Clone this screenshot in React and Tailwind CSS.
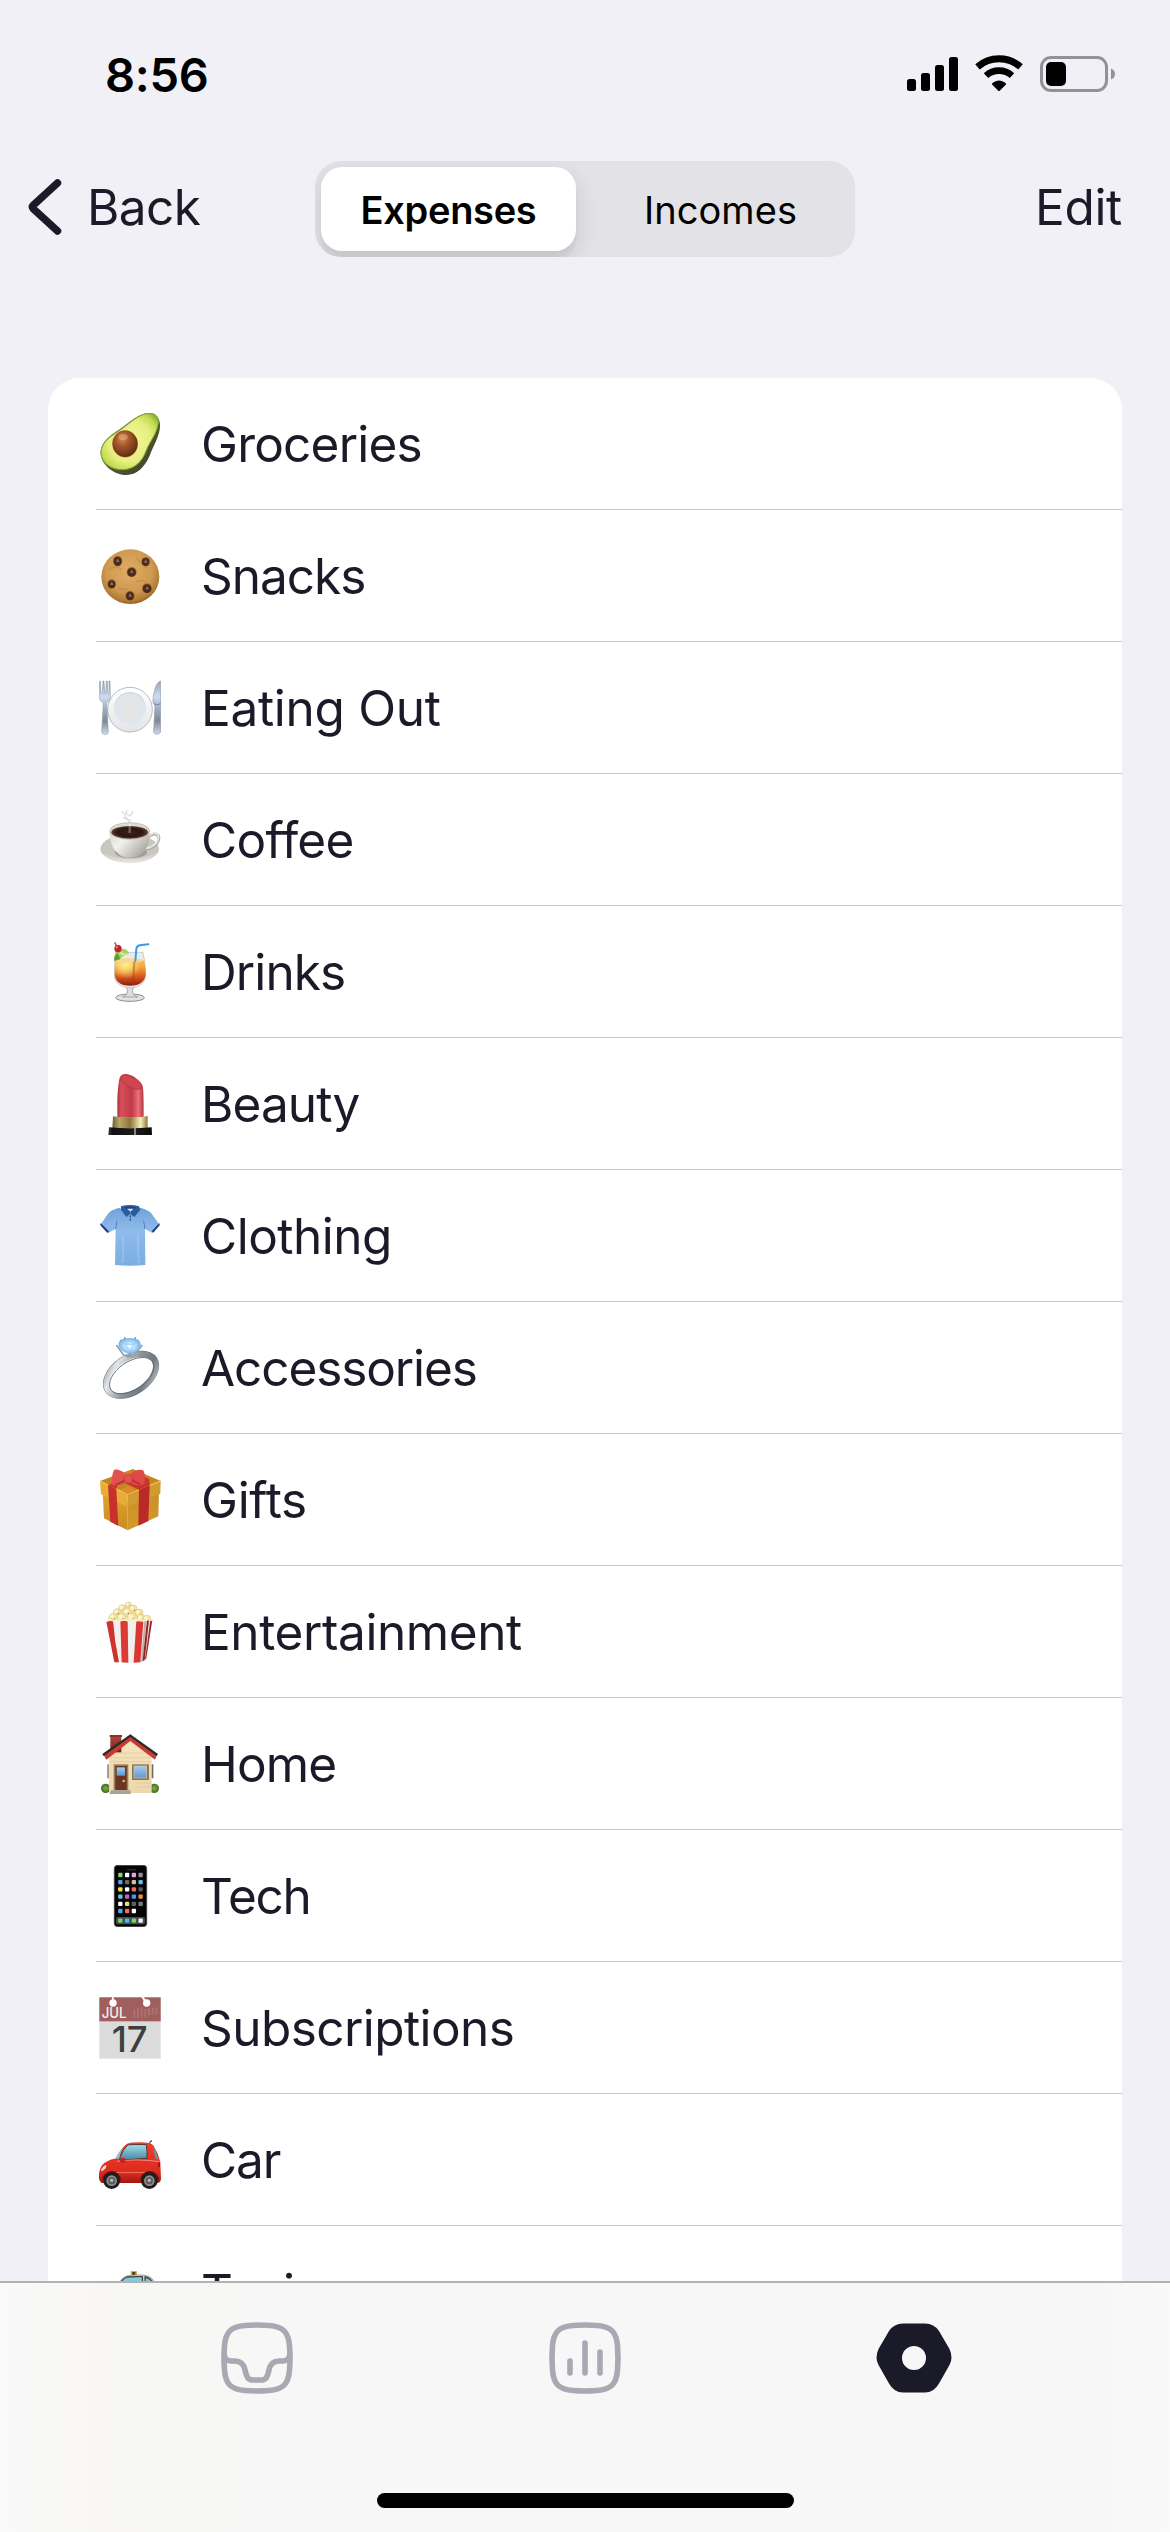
import React from "react";

function Lin({ id, stops, x1 = 0, y1 = 0, x2 = 0, y2 = 1 }) {
  return (
    <linearGradient id={id} x1={x1} y1={y1} x2={x2} y2={y2}>
      {stops.map(([o, c]) => (
        <stop key={o} offset={o} stopColor={c} />
      ))}
    </linearGradient>
  );
}

function Rad({ id, stops, cx = 0.5, cy = 0.5, r = 0.5 }) {
  return (
    <radialGradient id={id} cx={cx} cy={cy} r={r}>
      {stops.map(([o, c]) => (
        <stop key={o} offset={o} stopColor={c} />
      ))}
    </radialGradient>
  );
}

function Emoji({ children }) {
  return (
    <svg viewBox="0 0 186 186" className="h-[62px] w-[62px] shrink-0">
      {children}
    </svg>
  );
}

function Avocado() {
  return (
    <Emoji>
      <defs>
        <Lin id="avSkin" x1={0} x2={1} stops={[[0, "#5f8a1e"], [0.55, "#4d5a30"], [1, "#3c3a2a"]]} />
        <Rad id="avFlesh" cx={0.5} cy={0.5} r={0.62} stops={[[0, "#f4f79a"], [0.6, "#e6ef7e"], [0.85, "#c3dc52"], [1, "#8fb62f"]]} />
        <Rad id="avPit" cx={0.4} cy={0.32} r={0.7} stops={[[0, "#d98a50"], [0.4, "#a3562a"], [1, "#5e2a12"]]} />
      </defs>
      <path d="M150 0C170 0 185 18 183 40C182 66 168 90 156 118C146 146 124 186 82 186C50 186 8 160 5 122C4 84 40 64 66 46C94 26 116 2 150 0Z" fill="url(#avSkin)" />
      <path d="M148 1C168 0 180 10 178 30C174 62 154 82 142 112C130 146 106 170 70 170C34 170 6 148 6 120C6 84 42 66 68 48C96 28 118 4 148 1Z" fill="url(#avFlesh)" stroke="#7fa635" strokeWidth="3" />
      <ellipse cx="79" cy="94" rx="38" ry="40" fill="#c9b64c" />
      <ellipse cx="78" cy="92" rx="38" ry="40" fill="url(#avPit)" />
      <ellipse cx="72" cy="72" rx="14" ry="9" fill="#e9ab7d" opacity=".55" />
    </Emoji>
  );
}

const chips = [[56, 48, 12, 14], [140, 50, 11, 12], [98, 81, 13, 13], [38, 117, 11, 12], [144, 130, 13, 13], [93, 152, 12, 13]];

function Cookie() {
  return (
    <Emoji>
      <defs>
        <Rad id="ckBase" cx={0.48} cy={0.4} r={0.6} stops={[[0, "#dfad66"], [0.65, "#cf9a52"], [0.9, "#b47d37"], [1, "#935f25"]]} />
      </defs>
      <ellipse cx="94" cy="95" rx="87" ry="82" fill="url(#ckBase)" />
      <path d="M30 72q24-12 38 2M110 112q16-12 30 0M58 128q18 10 28 2M112 40q14 14 34 30" stroke="#b98440" strokeWidth="4" fill="none" opacity=".6" />
      {chips.map(([x, y, a, b]) => (
        <g key={x}>
          <ellipse cx={x} cy={y} rx={a + 2} ry={b + 2} fill="#a8682c" />
          <ellipse cx={x} cy={y + 1} rx={a} ry={b} fill="#4a2b1b" />
          <path d={`M${x - 5} ${y + 3}l5 -11l6 11z`} fill="#8a6a5a" />
        </g>
      ))}
    </Emoji>
  );
}

function Plate() {
  return (
    <Emoji>
      <defs>
        <Lin id="plRim" stops={[[0, "#ffffff"], [1, "#e4e4e6"]]} />
        <Lin id="plSteel" stops={[[0, "#9aa5b4"], [0.3, "#cfdcf0"], [0.45, "#a9bcd6"], [0.75, "#84878d"], [1, "#c9dcf5"]]} />
      </defs>
      <circle cx="93" cy="98" r="67" fill="url(#plRim)" stroke="#b5bcc5" strokeWidth="3" />
      <circle cx="93" cy="92" r="47" fill="#d3d6da" />
      <circle cx="93" cy="95" r="46" fill="#dde6f2" />
      <circle cx="93" cy="91" r="38" fill="#e4e4e4" />
      <path d="M2 12l2 0l2 36h4l2-36h3l2 36h3l2-36h3l1 36h4l0-36h3l1 44c0 14-6 18-11 21l5 86c1 13-20 13-20 0l5-86c-6-3-14-7-12-21z" fill="url(#plSteel)" stroke="#8792a0" strokeWidth="1.5" />
      <path d="M185 12v150c0 13-22 13-21 0l4-78c-8-3-7-18-4-32c4-20 9-36 21-40z" fill="url(#plSteel)" stroke="#8e9aaa" strokeWidth="2" />
      <path d="M164 80q10 7 21 0" stroke="#7d8896" strokeWidth="3" fill="none" />
    </Emoji>
  );
}

function Coffee() {
  return (
    <Emoji>
      <defs>
        <Lin id="cfSaucer" stops={[[0, "#b9b7b0"], [0.6, "#c9c7c0"], [1, "#e6e5e0"]]} />
        <Lin id="cfCup" x2={1} y2={0.6} stops={[[0, "#d8d6d0"], [0.4, "#f2f1ee"], [1, "#a9a7a1"]]} />
        <Rad id="cfBrew" stops={[[0, "#3a211a"], [0.7, "#2c1611"], [1, "#60402c"]]} />
      </defs>
      <g fill="none" stroke="#dcdce0" strokeLinecap="round" strokeWidth="4">
        <path d="M68 8q12 6 12 16q10 6 10 22" />
        <path d="M84 4q-6 12 6 14M102 8q-6 10-10 14M74 26q14 10 22 8M94 40v8" />
      </g>
      <ellipse cx="92" cy="120" rx="88" ry="42" fill="url(#cfSaucer)" />
      <ellipse cx="92" cy="114" rx="84" ry="36" fill="#c8c6bf" />
      <ellipse cx="96" cy="130" rx="48" ry="18" fill="#8f8d86" opacity=".7" />
      <path d="M146 86c20-20 38-10 32 8c-6 18-24 26-40 26" fill="none" stroke="#aeaca6" strokeWidth="9" />
      <path d="M147 84c20-20 36-10 30 8c-6 16-22 24-38 26" fill="none" stroke="#eceae6" strokeWidth="5" />
      <path d="M32 66c0 26 4 46 20 62c12 14 26 18 40 18s30-4 42-18c14-14 18-34 18-62z" fill="url(#cfCup)" />
      <ellipse cx="92" cy="66" rx="60" ry="25" fill="#dcdad5" stroke="#b2b0aa" strokeWidth="2" />
      <ellipse cx="92" cy="70" rx="55" ry="19" fill="url(#cfBrew)" />
      <path d="M92 44v28" stroke="#ffffff" opacity=".3" strokeWidth="7" />
    </Emoji>
  );
}

function Drink() {
  return (
    <Emoji>
      <defs>
        <Lin id="drLiquid" stops={[[0, "#f6c95c"], [0.3, "#f2a83a"], [0.65, "#d95a1e"], [1, "#8e1b0c"]]} />
        <Rad id="drGlow" cx={0.35} cy={0.25} r={0.5} stops={[[0, "#fff08a"], [1, "#fff08a00"]]} />
      </defs>
      <ellipse cx="93" cy="170" rx="43" ry="11" fill="#e2e2e0" stroke="#8d8d8b" strokeWidth="3" />
      <path d="M80 136q10 12 4 22q-4 8-14 10h46q-10-2-14-10q-6-10 4-22z" fill="#dededc" stroke="#9a9a98" strokeWidth="2.5" />
      <path d="M50 34h82q8 40 8 64c0 26-16 42-47 42s-47-16-47-42q0-24 4-64z" fill="#e9ecec" stroke="#b4b8b8" strokeWidth="2" />
      <path d="M49 56q42-8 86 2q5 24 5 40c0 22-18 36-47 36s-46-14-46-36q0-20 2-42z" fill="url(#drLiquid)" />
      <path d="M49 56q42-8 86 2q5 24 5 40c0 22-18 36-47 36s-46-14-46-36q0-20 2-42z" fill="url(#drGlow)" />
      <ellipse cx="92" cy="58" rx="42" ry="6" fill="#f3d9a0" />
      <path d="M46 58q-4-22 14-30q16-10 26 2l4 8q-14 2-20 10q-10 12-24 10z" fill="#a9cf5d" />
      <path d="M46 60q-2-14 10-24l8 18z" fill="#55a036" />
      <path d="M62 36l24 4M64 30l10 18" stroke="#e9f4c0" strokeWidth="3" />
      <path d="M47 4l6 12" stroke="#8d5a36" strokeWidth="4" />
      <circle cx="57" cy="23" r="11" fill="#c5242b" />
      <circle cx="53" cy="19" r="3" fill="#f59a92" />
      <path d="M109 60l3-36q1-9 10-11l26-3" fill="none" stroke="#3f9ade" strokeWidth="6" strokeLinecap="round" />
      <path d="M106 62l-4 66" stroke="#a3410f" opacity=".45" strokeWidth="6" />
    </Emoji>
  );
}

function Lipstick() {
  return (
    <Emoji>
      <defs>
        <Lin id="lpRed" x2={1} y2={0} stops={[[0, "#b3313c"], [0.15, "#d4505a"], [0.55, "#c23a45"], [0.8, "#e8727a"], [1, "#b43440"]]} />
        <Lin id="lpGold" x2={1} y2={0} stops={[[0, "#6f612f"], [0.2, "#b8a76c"], [0.5, "#8a7636"], [0.8, "#f6efb8"], [1, "#8d7a3a"]]} />
        <Lin id="lpBlack" x2={1} y2={0} stops={[[0, "#3a3a3a"], [0.1, "#111111"], [0.58, "#1b1b1b"], [0.61, "#c8c8c8"], [0.64, "#1b1b1b"], [1, "#0a0a0a"]]} />
      </defs>
      <path d="M55 134V90C55 60 58 30 62 14C66 2 78 2 86 4C106 8 130 26 132 44C134 64 134 100 134 134Z" fill="url(#lpRed)" />
      <path d="M66 14C70 4 84 4 94 10C112 18 128 32 129 42C128 52 106 50 92 42C76 34 62 24 66 14Z" fill="#cf4650" stroke="#a72c38" strokeWidth="2" />
      <path d="M42 130q52 8 104-1v37H40z" fill="url(#lpGold)" />
      <path d="M30 163q64 6 128 0l1 23H28z" fill="url(#lpBlack)" />
    </Emoji>
  );
}

function Shirt() {
  return (
    <Emoji>
      <defs>
        <Lin id="shBody" stops={[[0, "#6fa2dc"], [0.4, "#8fbbea"], [1, "#7aaee4"]]} />
      </defs>
      <path d="M60 8C44 14 34 16 26 28L4 60L28 84L50 72L48 180Q94 184 139 180L138 72L160 84L182 60L158 26C150 16 140 14 126 8Q94 30 60 8Z" fill="url(#shBody)" />
      <path d="M50 72l4-24M138 72l-4-24" stroke="#4d7fbd" strokeWidth="3" />
      <path d="M5 54l25 25l-5 5L4 61zM181 54l-23 25l5 4l19-22z" fill="#1e4380" />
      <path d="M66 4q27-8 54 0l4 10l-18 22l-12-10l-12 10l-16-22z" fill="#2c5b9e" />
      <path d="M76 7q18-5 36 0l-18 14z" fill="#1c4682" />
      <path d="M84 11h20l-10 9z" fill="#d8e4f2" />
      <path d="M94 22v26" stroke="#4f80ba" strokeWidth="4" />
      <circle cx="94" cy="34" r="2" fill="#234c84" />
      <circle cx="94" cy="45" r="2" fill="#234c84" />
      <path d="M70 90q6 40 0 84M118 86q-4 44 2 88" stroke="#a9cdf2" strokeWidth="6" opacity=".5" fill="none" />
    </Emoji>
  );
}

function Ring() {
  return (
    <Emoji>
      <defs>
        <Lin id="rgBand" x2={1} y2={1} stops={[[0, "#8d9299"], [0.2, "#e4e7ea"], [0.5, "#8e949b"], [0.75, "#71787f"], [1, "#c9cdd1"]]} />
        <Rad id="rgGem" stops={[[0, "#f2faff"], [0.5, "#b9defc"], [1, "#6fb2ee"]]} />
      </defs>
      <ellipse cx="96" cy="113" rx="91" ry="58" transform="rotate(-34 96 113)" fill="none" stroke="#666c73" strokeWidth="4" />
      <ellipse cx="96" cy="114" rx="83" ry="51" transform="rotate(-34 96 114)" fill="none" stroke="url(#rgBand)" strokeWidth="17" />
      <ellipse cx="98" cy="116" rx="75" ry="42" transform="rotate(-34 98 116)" fill="none" stroke="#5f666d" strokeWidth="2.5" />
      <path d="M52 24l22 30q16 8 32 0l24-30M86 62l6-14l8 14" stroke="#989ea5" strokeWidth="5" fill="none" />
      <path d="M64 8q28-10 54 0q10 10 6 22q-12 18-32 20q-20-2-32-20q-4-12 4-22z" fill="url(#rgGem)" />
      <path d="M66 12l14 10l12-14l12 14l14-10M80 22l12 24l12-24z" stroke="#8fc2f0" strokeWidth="2" fill="none" />
      <path d="M76 0l3 7M110 0l-3 7" stroke="#8b9096" strokeWidth="4" />
    </Emoji>
  );
}

function Gift() {
  return (
    <Emoji>
      <defs>
        <Lin id="gfL" stops={[[0, "#e3a52f"], [1, "#c98a22"]]} />
        <Lin id="gfR" stops={[[0, "#c8902a"], [1, "#d69a2c"]]} />
      </defs>
      <path d="M11 66L86 98V184L15 148Z" fill="url(#gfL)" />
      <path d="M86 98L180 66L178 142L86 184Z" fill="url(#gfR)" />
      <path d="M3 36L102 0L185 36L86 78Z" fill="#c28720" />
      <path d="M3 36L86 76V113L6 76Z" fill="#e8ac38" />
      <path d="M86 76L185 36L184 74L86 113Z" fill="#d39a30" />
      <path d="M3 36L86 76L185 36" fill="none" stroke="#f3d050" strokeWidth="3" />
      <path d="M27 48L52 60L58 171L34 158Z" fill="#c92f2b" />
      <path d="M120 62L152 49L148 156L118 170Z" fill="#b92a29" />
      <path d="M27 48L116 14L150 30L152 49L120 62L60 34L52 60Z" fill="#c6322d" />
      <path d="M64 62L88 50L112 64L86 76Z" fill="#e0892c" />
      <path d="M86 20C66 2 54 0 46 2C38 12 40 34 36 46C52 54 74 48 86 36Z" fill="#e2524c" />
      <path d="M88 20C108 2 124 0 132 4C140 14 138 32 136 46C118 54 102 48 88 36Z" fill="#e04a46" />
      <path d="M50 46q20-4 34-18M124 46q-18-6-32-18" stroke="#a62a2a" strokeWidth="4" fill="none" />
      <circle cx="88" cy="30" r="13" fill="#e3534e" stroke="#bb3534" strokeWidth="2" />
    </Emoji>
  );
}

const kernels = [[88, 12, 9], [70, 22, 11], [102, 24, 12], [54, 34, 11], [84, 34, 13], [120, 36, 12], [42, 50, 12], [68, 50, 13], [98, 50, 14], [126, 52, 12], [144, 54, 11], [34, 58, 7]];

function Popcorn() {
  return (
    <Emoji>
      {kernels.map(([x, y, r]) => (
        <g key={`${x}-${y}`}>
          <circle cx={x} cy={y} r={r} fill="#f3e3a2" stroke="#dcc57a" strokeWidth="2" />
          <circle cx={x - 3} cy={y - 3} r={r / 2} fill="#fdf6d2" />
          <circle cx={x + 4} cy={y + 4} r="2.5" fill="#b88334" />
        </g>
      ))}
      <path d="M22 62Q90 50 160 58L140 174L122 184Q84 186 46 184Z" fill="#f4efec" />
      <path d="M22 62L42 58Q46 120 60 184H46Z" fill="#cf3330" />
      <path d="M64 59L86 60L88 185L68 184Z" fill="#dc3a35" />
      <path d="M112 60L133 62L124 184L104 185Z" fill="#d83733" />
      <path d="M136 60L142 59L132 180L126 183Z" fill="#c9a9a2" />
      <path d="M144 57L150 57L137 178L131 180Z" fill="#8e2622" />
      <path d="M154 56L160 57L142 172L138 176Z" fill="#9d2b26" />
      <path d="M22 62q10-8 20-2q10-6 22 0q12-6 22 0q14-6 26 0q10-6 22 0q12-6 26-2" stroke="#f8eec6" strokeWidth="4" fill="none" />
    </Emoji>
  );
}

function House() {
  return (
    <Emoji>
      <defs>
        <Lin id="hsWall" stops={[[0, "#f7e4bd"], [1, "#ecd7ae"]]} />
        <Lin id="hsPane" stops={[[0, "#a4cbee"], [1, "#5f98d2"]]} />
        <Rad id="hsBush" stops={[[0, "#8aab4b"], [1, "#3f6a24"]]} />
        <Lin id="hsChimney" stops={[[0, "#b4493e"], [1, "#6e1f1a"]]} />
      </defs>
      <circle cx="20" cy="166" r="14" fill="url(#hsBush)" />
      <circle cx="166" cy="166" r="14" fill="url(#hsBush)" />
      <rect x="24" y="94" width="6" height="42" fill="#a6a092" />
      <rect x="157" y="94" width="6" height="42" fill="#6d6a60" />
      <path d="M30 72L94 18L158 72V180H30Z" fill="url(#hsWall)" />
      <path d="M50 60h90M34 74h120M32 86h124M112 150h44M112 162h44" stroke="#dcc698" strokeWidth="2" />
      <rect x="34" y="8" width="33" height="50" fill="url(#hsChimney)" />
      <rect x="32" y="6" width="37" height="6" fill="#8e3028" />
      <path d="M94 6L174 66L168 80L94 24L22 80L14 66Z" fill="#c83b32" />
      <path d="M12 66L94 8L175 66" fill="none" stroke="#2b2b29" strokeWidth="7" />
      <rect x="44" y="94" width="44" height="78" fill="#9a7d5a" />
      <rect x="49" y="99" width="34" height="72" fill="#6b3321" />
      <rect x="53" y="103" width="25" height="25" fill="url(#hsPane)" />
      <circle cx="74" cy="144" r="4" fill="#e8bd4a" />
      <rect x="99" y="94" width="51" height="47" fill="#8f7656" />
      <rect x="105" y="99" width="38" height="36" fill="url(#hsPane)" stroke="#d8c7a4" strokeWidth="2" />
      <path d="M36 172h58l2 11H32z" fill="#a8a297" />
    </Emoji>
  );
}

const appRows = [
  ["#7ad66d", "#ffffff", "#e3a3ec", "#8f8f8f"],
  ["#4aa8f0", "#6c6c6c", "#d9bd95", "#5fc3e8"],
  ["#f5df5b", "#ffffff", "#ef6a60", "#5a5a5a"],
  ["#5ccbd2", "#cc58d6", "#3f9cf0", "#ef9330"],
  ["#ffffff", "#f3e05c", "#5f5f5f", "#7c7c7c"],
  ["#4fa9ef", "#ef6a60", "#ffffff"],
];
const dock = ["#6fd867", "#4fb4f2", "#6fd867", "#f2f2f2"];

function Phone() {
  return (
    <Emoji>
      <rect x="46" y="1" width="97" height="184" rx="10" fill="#050505" stroke="#454547" strokeWidth="3" />
      <rect x="84" y="11" width="28" height="6" rx="3" fill="#222" />
      {appRows.map((row, r) =>
        row.map((c, i) => <rect key={`${r}-${i}`} x={57.5 + i * 20.3} y={23.5 + r * 21.6} width="13" height="13" rx="3" fill={c} />)
      )}
      <rect x="51" y="156" width="87" height="22" rx="5" fill="#4b4b4d" />
      {dock.map((c, i) => (
        <rect key={i} x={57.5 + i * 20.3} y="160.5" width="13" height="13" rx="3" fill={c} />
      ))}
    </Emoji>
  );
}

function Calendar() {
  return (
    <Emoji>
      <rect x="0" y="0" width="186" height="186" fill="#e6e6e6" />
      <rect x="3" y="72" width="180" height="110" fill="#dbdbdb" />
      <rect x="1" y="1" width="184" height="72" fill="#a05f5d" />
      <path d="M39 0h5v14h-5zM127 0h7l10 14h-8z" fill="#fff" />
      <circle cx="42" cy="18" r="11" fill="#fff" />
      <circle cx="143" cy="18" r="11" fill="#fff" />
      <path d="M106 38v24M117 34v28M128 32v30M139 36v26M150 34v20M161 32v22M172 32v20" stroke="#b98784" strokeWidth="5" strokeDasharray="2.5 2" />
      <text x="8" y="63" fontFamily="Inter, sans-serif" fontSize="42" fontWeight="500" fill="#f7efef" textLength="74" lengthAdjust="spacingAndGlyphs">JUL</text>
      <text x="38" y="166" fontFamily="Inter, sans-serif" fontSize="108" fontWeight="500" fill="#3c3f3d" textLength="108" lengthAdjust="spacingAndGlyphs">17</text>
    </Emoji>
  );
}

function Wheel({ cx, cy }) {
  return (
    <g>
      <circle cx={cx} cy={cy} r="25" fill="#1e1e1e" />
      <circle cx={cx} cy={cy} r="16" fill="#8f8f91" />
      <circle cx={cx} cy={cy} r="11" fill="#5c5c5e" />
      <circle cx={cx} cy={cy - 1} r="5" fill="#b9b9bb" />
    </g>
  );
}

function Car() {
  return (
    <Emoji>
      <defs>
        <Lin id="crBody" stops={[[0, "#e8402e"], [0.45, "#e63225"], [0.75, "#dc2a1e"], [1, "#9e1710"]]} />
        <Lin id="crGlass" stops={[[0, "#9be0ea"], [1, "#4d86a2"]]} />
      </defs>
      <path d="M150 46l4-8l5-3" stroke="#555" strokeWidth="4" fill="none" />
      <path d="M0 136Q2 112 16 102Q34 90 52 88Q66 56 84 44Q96 40 124 40Q154 40 164 50Q178 72 184 100L186 148Q186 160 176 162H8Q-2 158 0 136Z" fill="url(#crBody)" />
      <path d="M62 88Q72 60 86 48Q94 46 142 47Q145 66 144 88Q100 92 62 92Z" fill="url(#crGlass)" stroke="#59332f" strokeWidth="3" />
      <path d="M50 88Q60 66 74 54Q64 70 60 90Z" fill="#7fc3d0" />
      <path d="M162 52Q172 66 178 92L170 90Q164 70 162 52Z" fill="#5f97a5" />
      <path d="M54 97Q110 88 182 98" stroke="#f58c78" strokeWidth="3" fill="none" />
      <path d="M30 130Q80 132 140 130" stroke="#f36e5c" strokeWidth="3" fill="none" />
      <path d="M6 126Q8 112 22 108Q24 118 10 126Z" fill="#f8d7cf" />
      <path d="M180 100v14" stroke="#7b120c" strokeWidth="4" />
      <rect x="63" y="86" width="16" height="16" rx="6" fill="#c72118" />
      <path d="M10 154a28 28 0 0 1 56 0zM124 154a28 28 0 0 1 56 0z" fill="#6b0f0a" />
      <Wheel cx={38} cy={155} />
      <Wheel cx={151} cy={155} />
    </Emoji>
  );
}

function Taxi() {
  return (
    <Emoji>
      <rect x="95" y="30" width="19" height="13" rx="3" fill="#e3a93a" />
      <rect x="100" y="33" width="9" height="9" fill="#4d3a1e" />
      <path d="M58 72Q66 50 84 45Q104 40 130 42Q152 44 160 54Q168 64 174 80L184 110V150H2V110Q20 94 58 90Z" fill="#dcdcda" stroke="#777" strokeWidth="2" />
      <path d="M60 76Q68 54 84 48Q104 46 130 47L132 90H56ZM138 48Q152 50 158 60L170 90H140Z" fill="#84cbd6" stroke="#444" strokeWidth="4" />
    </Emoji>
  );
}

const categories = [
  ["Groceries", Avocado, "tracking-[-0.78px]"],
  ["Snacks", Cookie, "tracking-[-1px]"],
  ["Eating Out", Plate, "tracking-[-0.3px]"],
  ["Coffee", Coffee, "tracking-[-0.7px]"],
  ["Drinks", Drink, "tracking-[-0.9px]"],
  ["Beauty", Lipstick, "tracking-[-0.9px]"],
  ["Clothing", Shirt, "tracking-[-0.5px]"],
  ["Accessories", Ring, "tracking-[-1.1px]"],
  ["Gifts", Gift, "tracking-[-0.3px]"],
  ["Entertainment", Popcorn, "tracking-[-0.4px]"],
  ["Home", House, "tracking-[-0.9px]"],
  ["Tech", Phone, "tracking-[-1.2px]"],
  ["Subscriptions", Calendar, "tracking-[-0.57px]"],
  ["Car", Car, "tracking-[-1.1px]"],
  ["Taxi", Taxi, "tracking-[-0.4px]"],
];

function StatusBar() {
  return (
    <div className="flex h-[148px] shrink-0 items-center justify-between pr-[54px] pl-[105px] text-black">
      <span className="text-[47px] leading-none font-semibold tracking-[-0.3px]">8:56</span>
      <svg viewBox="0 0 209 40" className="h-10 w-[209px]" fill="currentColor">
        <rect x="0" y="25" width="9" height="12" rx="2.5" />
        <rect x="14" y="19" width="9" height="18" rx="2.5" />
        <rect x="28" y="11" width="9" height="26" rx="2.5" />
        <rect x="42" y="3" width="9" height="34" rx="2.5" />
        <path d="M70.5 12.9A32.5 32.5 0 0 1 113.5 12.9" fill="none" stroke="currentColor" strokeWidth="6.8" />
        <path d="M79 21.6A19.5 19.5 0 0 1 105 21.6" fill="none" stroke="currentColor" strokeWidth="6.6" />
        <path d="M84.8 30.2Q85 29 86.6 28.2Q92 24.6 97.4 28.2Q99 29 99.2 30.2L93 36.4Q92 37.4 91 36.4Z" />
        <rect x="134.5" y="3.5" width="65" height="33" rx="9.5" fill="none" stroke="#929296" strokeWidth="3" />
        <rect x="139" y="8" width="20" height="24" rx="5" />
        <path d="M204 14.5Q208 16 208 20T204 25.5Z" fill="#929296" />
      </svg>
    </div>
  );
}

function NavBar() {
  return (
    <div className="flex h-[118px] shrink-0 items-center pr-12 pl-[28px] text-[49.5px]">
      <button className="flex w-[287px] items-center gap-[25px]">
        <svg viewBox="0 0 34 58" className="h-[58px] w-[34px]" fill="none" stroke="currentColor" strokeWidth="7.5" strokeLinecap="round" strokeLinejoin="round">
          <path d="M29.5 5L5.5 27Q3.5 29 5.5 31L29.5 53" />
        </svg>
        <span className="leading-[60px] tracking-[-0.6px]">Back</span>
      </button>
      <div className="mt-1 flex h-24 w-[540px] overflow-hidden rounded-[26px] bg-[#e3e2e7] p-1.5 text-[38px] text-black">
        <div className="flex w-[255px] items-center justify-center rounded-[21px] bg-white pt-0.5 font-semibold tracking-[-0.3px] shadow-[0_9px_24px_rgba(0,0,0,0.12),0_9px_3px_rgba(0,0,0,0.04)]">Expenses</div>
        <div className="flex flex-1 items-center justify-center pt-0.5 pl-4 font-normal tracking-[0.05px]">Incomes</div>
      </div>
      <button className="flex-1 text-right leading-[60px] tracking-[-0.3px]">Edit</button>
    </div>
  );
}

const squircle = "M25 4.5Q37 3.5 49 4.5C63 5.5 68.5 11 69.5 25Q70.5 37 69.5 49C68.5 63 63 68.5 49 69.5Q37 70.5 25 69.5C11 68.5 5.5 63 4.5 49Q3.5 37 4.5 25C5.5 11 11 5.5 25 4.5Z";

function TabBar() {
  return (
    <div className="flex h-[251px] shrink-0 flex-col justify-between border-t-2 border-[#b2b2b4] bg-[#f7f7f7] bg-[linear-gradient(90deg,#f9f9f9_0%,#f8f7f4_9%,#f7f7f7_22%,#f7f7f7_94%,#f9f9f9_100%)] pb-6">
      <div className="flex items-center justify-between pt-[38px] pr-[218px] pl-[220px]">
        <svg viewBox="0 0 74 74" className="size-[74px]" fill="none" stroke="#a9a8b3" strokeWidth="5.6" strokeLinecap="round" strokeLinejoin="round">
          <path d={squircle} />
          <path d="M4.5 35Q6 40 11 40H15C21 40 24 44 25 49C27 57 28 59 33 59H41C46 59 47 57 49 49C50 44 53 40 59 40H63Q68 40 69.5 35" />
        </svg>
        <svg viewBox="0 0 74 74" className="size-[74px]" fill="none" stroke="#a9a8b3" strokeWidth="5.6" strokeLinecap="round">
          <path d={squircle} />
          <path d="M22 40V52M37 22V52M52 31V52" />
        </svg>
        <svg viewBox="0 0 76 74" className="h-[74px] w-[76px]">
          <path fillRule="evenodd" fill="#1b1a29" d="M27 2.5H49Q58 2.5 63 10L73.5 28Q77.5 37 73.5 44L63 62.5Q58 71.5 49 71.5H27Q18 71.5 13 62.5L2.5 44Q-1.5 37 2.5 28L13 10Q18 2.5 27 2.5ZM38 25A12 12 0 1 0 38 49A12 12 0 1 0 38 25Z" />
        </svg>
      </div>
      <div className="h-[15px] w-[417px] self-center rounded-full bg-black" />
    </div>
  );
}

export default function App() {
  return (
    <div className="flex h-[2532px] w-[1170px] flex-col overflow-hidden bg-[#f1f0f6] font-['Inter',sans-serif] text-[#1b1a29]">
      <StatusBar />
      <NavBar />
      <div className="min-h-0 flex-1 overflow-hidden px-12 pt-28">
        <div className="rounded-t-[32px] bg-white">
          {categories.map(([name, Icon, tracking]) => (
            <div key={name} className="ml-12 flex h-[132px] items-center gap-10 border-b border-[#c6c6c8] pl-[3px]">
              <Icon />
              <span className={`text-[49.5px] leading-[60px] ${tracking}`}>{name}</span>
            </div>
          ))}
        </div>
      </div>
      <TabBar />
    </div>
  );
}
